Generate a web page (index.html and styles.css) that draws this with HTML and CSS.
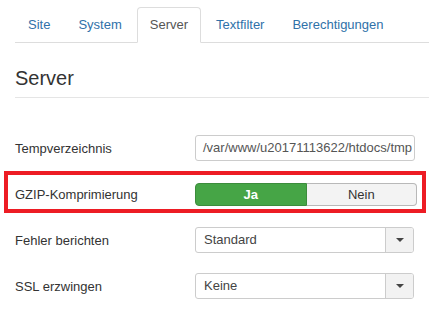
FILE: index.html
```html
<!DOCTYPE html>
<html lang="de">
<head>
<meta charset="utf-8">
<title>Server</title>
<link rel="stylesheet" href="styles.css">
</head>
<body>
<div class="page">
  <ul class="tabs">
    <li class="tab"><span>Site</span></li>
    <li class="tab"><span>System</span></li>
    <li class="tab active"><span>Server</span></li>
    <li class="tab"><span>Textfilter</span></li>
    <li class="tab"><span>Berechtigungen</span></li>
  </ul>
  <h2 class="heading">Server</h2>
  <div class="form">
    <div class="row">
      <div class="label">Tempverzeichnis</div>
      <div class="input">/var/www/u20171113622/htdocs/tmp</div>
    </div>
    <div class="row highlighted">
      <div class="label">GZIP-Komprimierung</div>
      <div class="toggle">
        <div class="opt yes">Ja</div>
        <div class="opt no">Nein</div>
      </div>
    </div>
    <div class="row">
      <div class="label">Fehler berichten</div>
      <div class="select">
        <div class="select-value">Standard</div>
        <div class="select-btn"><span class="caret"></span></div>
      </div>
    </div>
    <div class="row">
      <div class="label">SSL erzwingen</div>
      <div class="select">
        <div class="select-value">Keine</div>
        <div class="select-btn"><span class="caret"></span></div>
      </div>
    </div>
  </div>
</div>
</body>
</html>
```

FILE: styles.css
```css
html, body {
  margin: 0;
  padding: 0;
  background: #fff;
}
body {
  font-family: "Liberation Sans", Arial, sans-serif;
  font-size: 13px;
  color: #333;
}
.page {
  padding: 7px 0 0 15px;
}
.tabs {
  list-style: none;
  margin: 0;
  padding: 0;
  display: flex;
  border-bottom: 1px solid #ddd;
}
.tab {
  padding: 8px 12px;
  line-height: 18px;
  margin-right: 2px;
  margin-bottom: -1px;
  border: 1px solid transparent;
  border-radius: 4px 4px 0 0;
  color: #3071a9;
}
.tab.active {
  color: #555;
  border-color: #ddd;
  border-bottom-color: #fff;
  background: #fff;
}
.heading {
  margin: 23px 0 0;
  font-size: 20px;
  font-weight: normal;
  line-height: 24px;
  color: #333;
  padding-bottom: 7px;
  border-bottom: 1px solid #e5e5e5;
}
.form {
  display: flex;
  flex-direction: column;
  gap: 20px;
  margin-top: 37px;
}
.row {
  display: flex;
  align-items: center;
  height: 26px;
  position: relative;
}
.label {
  width: 180px;
  flex: none;
  color: #333;
}
.input {
  width: 210px;
  height: 24px;
  line-height: 24px;
  padding: 0 1px 0 7px;
  border: 1px solid #ccc;
  border-radius: 3px;
  color: #555;
  white-space: nowrap;
  overflow: hidden;
}
.highlighted::after {
  content: "";
  position: absolute;
  left: -11px;
  width: 422px;
  top: -10px;
  bottom: -6px;
  border: 4px solid #ed1c24;
  box-sizing: border-box;
  pointer-events: none;
}
.toggle {
  display: flex;
  width: 222px;
  height: 23px;
}
.opt {
  flex: 1;
  display: flex;
  align-items: center;
  justify-content: center;
  box-sizing: border-box;
}
.yes {
  background: #46a546;
  border: 1px solid #3c8c3c;
  border-radius: 4px 0 0 4px;
  color: #fff;
  font-weight: bold;
}
.no {
  background: #f3f3f3;
  border: 1px solid #b8b8b8;
  border-left: none;
  border-radius: 0 4px 4px 0;
  color: #333;
}
.select {
  display: flex;
  width: 219px;
  height: 26px;
  box-sizing: border-box;
  border: 1px solid #ccc;
  border-radius: 3px;
  overflow: hidden;
}
.select-value {
  flex: 1;
  padding-left: 8px;
  line-height: 24px;
  color: #444;
}
.select-btn {
  width: 27px;
  background: #f2f2f2;
  border-left: 1px solid #ccc;
  display: flex;
  align-items: center;
  justify-content: center;
}
.caret {
  width: 0;
  height: 0;
  border-left: 4px solid transparent;
  border-right: 4px solid transparent;
  border-top: 4px solid #444;
}
```
